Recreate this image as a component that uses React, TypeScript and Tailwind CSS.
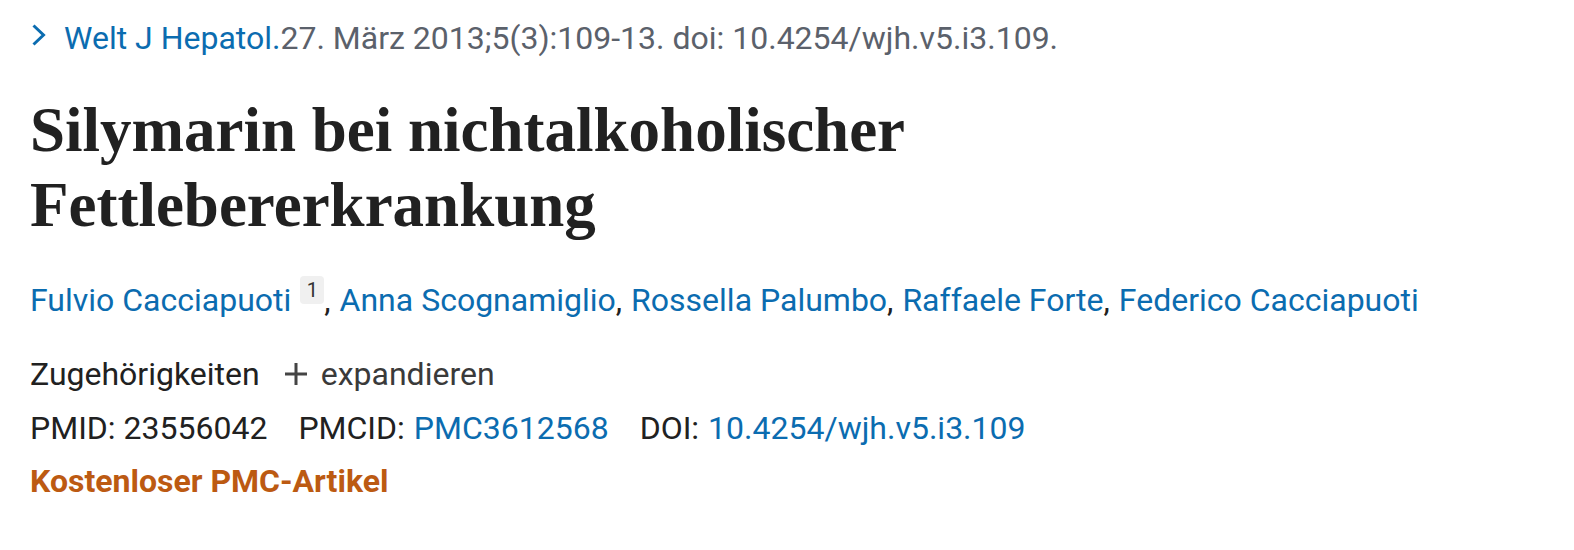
import React from "react";

export default function App() {
  const sans = { fontFamily: "Roboto, 'Liberation Sans', sans-serif" };
  return (
    <div className="bg-white w-[1574px] h-[550px] pl-[30px] pt-[14px]" style={sans}>
      <div className="flex items-center text-[32px] leading-[48px]">
        <svg viewBox="0 0 18 24" className="w-[18px] h-[24px] shrink-0 mr-[16px] mb-[6px]">
          <path d="M3.5 2.5 L13.5 12 L3.5 21.5" fill="none" stroke="#0b6cb0" strokeWidth="3" />
        </svg>
        <span className="text-[#0b6cb0]">Welt J Hepatol.</span>
        <span className="text-[#5b616b]">27. März 2013;5(3):109-13. doi: 10.4254/wjh.v5.i3.109.</span>
      </div>
      <h1
        className="mt-[31px] text-[63px] leading-[75px] font-bold text-[#212121]"
        style={{ fontFamily: "'Liberation Serif', serif" }}
      >
        Silymarin bei nichtalkoholischer
        <br />
        Fettlebererkrankung
      </h1>
      <div className="mt-[33px] text-[32px] leading-[48px] text-[#0b6cb0] flex items-center">
        <span>Fulvio Cacciapuoti</span>
        <span className="ml-[9px] w-[24px] h-[28px] rounded-[4px] bg-[#f0f0f0] text-[#333] text-[20px] leading-[28px] text-center relative top-[-10px]">
          1
        </span>
        <span className="text-[#212121]">,</span>
        <span className="ml-[9px]">Anna Scognamiglio</span>
        <span className="text-[#212121]">,</span>
        <span className="ml-[9px]">Rossella Palumbo</span>
        <span className="text-[#212121]">,</span>
        <span className="ml-[9px]">Raffaele Forte</span>
        <span className="text-[#212121]">,</span>
        <span className="ml-[9px]">Federico Cacciapuoti</span>
      </div>
      <div className="mt-[26px] text-[32px] leading-[48px] flex items-center">
        <span className="text-[#212121]">Zugehörigkeiten</span>
        <svg viewBox="0 0 22 22" className="w-[22px] h-[22px] shrink-0 ml-[25px] mr-[14px]">
          <path d="M11 0 V22 M0 11 H22" stroke="#444" strokeWidth="3" />
        </svg>
        <span className="text-[#3a3a3a]">expandieren</span>
      </div>
      <div className="mt-[6px] text-[32px] leading-[48px] flex items-center">
        <span className="text-[#212121]">PMID: 23556042</span>
        <span className="ml-[31px] text-[#212121]">PMCID:</span>
        <span className="ml-[9px] text-[#0b6cb0]">PMC3612568</span>
        <span className="ml-[31px] text-[#212121]">DOI:</span>
        <span className="ml-[9px] text-[#0b6cb0]">10.4254/wjh.v5.i3.109</span>
      </div>
      <div className="mt-[5px] text-[32px] leading-[48px] font-bold text-[#bc5a12]">
        Kostenloser PMC-Artikel
      </div>
    </div>
  );
}
